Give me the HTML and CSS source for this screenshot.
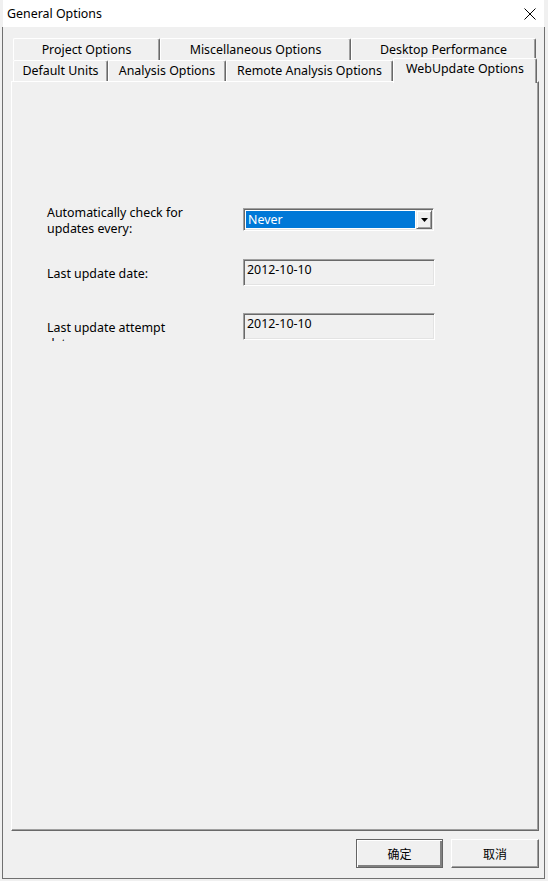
FILE: index.html
```html
<!DOCTYPE html>
<html>
<head>
<meta charset="utf-8">
<title>General Options</title>
<link rel="stylesheet" href="styles.css">
</head>
<body>
<div class="window">
  <div class="titlebar">
    <span class="title">General Options</span>
    <svg class="close" width="12" height="12" viewBox="0 0 12 12"><path d="M0.5 0.5 L11.5 11.5 M11.5 0.5 L0.5 11.5" stroke="#000" stroke-width="1" fill="none"/></svg>
  </div>
  <div class="body">
    <div class="tabrow row1">
      <div class="tab t-project">Project Options</div>
      <div class="tab t-misc">Miscellaneous Options</div>
      <div class="tab t-desk">Desktop Performance</div>
    </div>
    <div class="tabrow row2">
      <div class="tab t-units">Default Units</div>
      <div class="tab t-analysis">Analysis Options</div>
      <div class="tab t-remote">Remote Analysis Options</div>
      <div class="tab t-web selected">WebUpdate Options</div>
    </div>
    <div class="panel">
      <div class="form">
        <div class="frow r1">
          <div class="label">Automatically check for<br>updates every:</div>
          <div class="combo">
            <div class="combo-val">Never</div>
            <div class="combo-btn"><svg width="7" height="4" viewBox="0 0 7 4"><path d="M0 0 H7 L3.5 4 Z" fill="#000"/></svg></div>
          </div>
        </div>
        <div class="frow r2">
          <div class="label">Last update date:</div>
          <div class="textbox">2012-10-10</div>
        </div>
        <div class="frow r3">
          <div class="label clipped">Last update attempt<br>date:</div>
          <div class="textbox">2012-10-10</div>
        </div>
      </div>
    </div>
    <div class="buttons">
      <button class="btn default">确定</button>
      <button class="btn">取消</button>
    </div>
  </div>
</div>
</body>
</html>
```
FILE: styles.css
```css
html, body {
  margin: 0;
  padding: 0;
}
body {
  background: #f0f0f0;
  width: 548px;
  height: 881px;
  overflow: hidden;
  font-family: "Noto Sans", "Noto Sans CJK SC", sans-serif;
  font-size: 12.4px;
  color: #000;
}
.window {
  margin-left: 2px;
  width: 543px;
}
.titlebar {
  margin: 0 1px;
  height: 27px;
  background: #fff;
  display: flex;
  align-items: center;
  justify-content: space-between;
  padding: 0 8px 0 4px;
  box-sizing: border-box;
}
.title {
  line-height: 16px;
}
.close {
  display: block;
}
.body {
  border: 1px solid #707070;
  border-top: none;
  padding: 11px 5px 10px 8px;
}
.tabrow {
  display: flex;
  margin-left: 2px;
}
.row1 {
  height: 22px;
}
.row2 {
  height: 21px;
  align-items: flex-start;
}
.tab {
  box-sizing: border-box;
  background: #f0f0f0;
  border-top: 1px solid #fff;
  border-left: 1px solid #fff;
  border-right: 1px solid #696969;
  box-shadow: inset -1px 0 #a0a0a0;
  border-top-left-radius: 2px;
  border-top-right-radius: 2px;
  display: flex;
  justify-content: center;
  align-items: center;
  line-height: 16px;
  white-space: nowrap;
}
.row1 .tab { height: 22px; }
.row2 .tab { height: 21px; }
.t-project { width: 147px; }
.t-misc { width: 191px; }
.t-desk { width: 185px; }
.t-units { width: 95px; }
.t-analysis { width: 118px; }
.t-remote { width: 167px; }
.row2 .t-web {
  width: 144px;
  height: 25px;
  margin-top: -2px;
  align-items: flex-start;
  padding-top: 2px;
  position: relative;
  z-index: 1;
}
.panel {
  box-sizing: border-box;
  width: 528px;
  height: 750px;
  border-top: 1px solid #fff;
  border-left: 1px solid #fff;
  border-right: 1px solid #696969;
  border-bottom: 1px solid #696969;
  box-shadow: inset -1px -1px #a0a0a0;
}
.form {
  padding: 123px 0 0 35px;
}
.frow {
  display: flex;
  align-items: flex-start;
}
.label {
  width: 196px;
  line-height: 16px;
}
.r1 { height: 54px; }
.r2 { height: 54px; }
.r2 .label { margin-top: 7px; }
.r3 .label { margin-top: 7px; }
.clipped {
  height: 21px;
  overflow: hidden;
}
.combo {
  margin-top: 3px;
  box-sizing: border-box;
  width: 191px;
  height: 23px;
  display: flex;
  background: #fff;
  border: 1px solid;
  border-color: #a0a0a0 #fff #fff #a0a0a0;
  box-shadow: inset 1px 1px #696969, inset -1px -1px #e3e3e3;
  padding: 1px;
}
.combo-val {
  flex: 1;
  background: #0078d7;
  color: #fff;
  margin: 1px 1px 1px 1px;
  padding-left: 2px;
  line-height: 17px;
}
.combo-btn {
  width: 16px;
  box-sizing: border-box;
  background: #f0f0f0;
  border-top: 1px solid #f0f0f0;
  border-left: 1px solid #f0f0f0;
  border-right: 1px solid #696969;
  border-bottom: 1px solid #696969;
  box-shadow: inset 1px 1px #fff, inset -1px -1px #a0a0a0;
  display: flex;
  align-items: center;
  justify-content: center;
}
.combo-btn svg {
  display: block;
}
.textbox {
  box-sizing: border-box;
  width: 192px;
  height: 27px;
  background: #f0f0f0;
  border: 1px solid;
  border-color: #a0a0a0 #fff #fff #a0a0a0;
  box-shadow: inset 1px 1px #696969, inset -1px -1px #e3e3e3;
  padding: 2px 0 0 3px;
  line-height: 16px;
}
.buttons {
  display: flex;
  justify-content: flex-end;
  gap: 8px;
  margin-top: 8px;
}
.btn {
  box-sizing: border-box;
  height: 29px;
  width: 88px;
  font-family: "Noto Sans CJK SC", sans-serif;
  font-size: 12px;
  color: #000;
  background: #f0f0f0;
  border: 1px solid;
  border-color: #fff #696969 #696969 #fff;
  box-shadow: inset -1px -1px #a0a0a0;
  padding: 0;
  margin: 0;
}
.btn.default {
  width: 87px;
  border-color: #646464;
  box-shadow: inset 1px 1px #fff, inset -2px -2px #808080;
}
```
